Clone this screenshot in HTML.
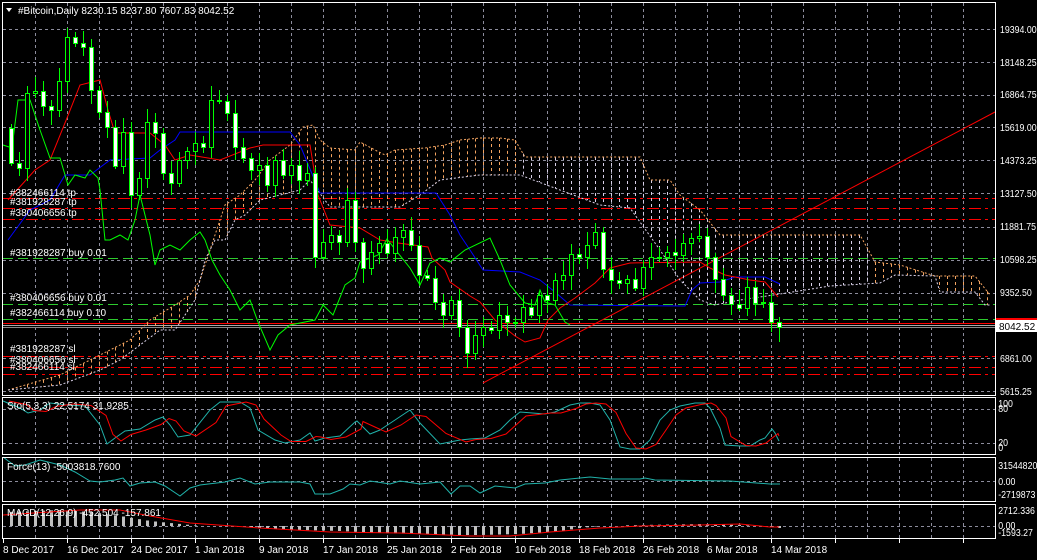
<!DOCTYPE html>
<html><head><meta charset="utf-8"><style>
html,body{margin:0;padding:0;background:#000;width:1037px;height:560px;overflow:hidden}
svg{display:block;font-family:"Liberation Sans",sans-serif}
</style></head><body>
<svg id="s" width="1037" height="560" viewBox="0 0 1037 560" xmlns="http://www.w3.org/2000/svg">
<rect width="1037" height="560" fill="#000"/>
<g id="grid"></g>
<g id="lv"></g>
<g id="cloud"></g>
<g id="ind"></g>
<g id="cand"></g>
<g id="sub"></g>
<g fill="none" stroke="#fff" stroke-width="1">
<rect x="2.5" y="2.5" width="993" height="393"/>
<rect x="2.5" y="397.5" width="993" height="57"/>
<rect x="2.5" y="457.5" width="993" height="44"/>
<rect x="2.5" y="504.5" width="993" height="34"/>
</g>
<g fill="#fff" font-size="10">
<text x="18" y="14">#Bitcoin,Daily  8230.15 8237.80 7607.83 8042.52</text>
<polygon points="6,8 12,8 9,12"/>
</g>
<g fill="#fff" font-size="10">
<text x="10" y="196">#382466114 tp</text>
<text x="10" y="205">#381928287 tp</text>
<text x="10" y="216">#380406656 tp</text>
<text x="10" y="256">#381928287 buy 0.01</text>
<text x="10" y="301">#380406656 buy 0.01</text>
<text x="10" y="316">#382466114 buy 0.10</text>
<text x="10" y="352">#381928287 sl</text>
<text x="10" y="363">#380406656 sl</text>
<text x="10" y="370">#382466114 sl</text>
<text x="7" y="409">Sto(5,3,3) 22.5174 31.9285</text>
<text x="7" y="470">Force(13) -5003818.7600</text>
<text x="7" y="516">MACD(12,26,9) -452.504 -157.861</text>
</g>
<g fill="#fff" font-size="10" transform="translate(1000,0) scale(0.88,1)">
<text x="0" y="33">19394.00</text>
<text x="0" y="66">18148.25</text>
<text x="0" y="98">16864.75</text>
<text x="0" y="131">15619.00</text>
<text x="0" y="164">14373.25</text>
<text x="0" y="197">13127.50</text>
<text x="0" y="230">11881.75</text>
<text x="0" y="263">10598.25</text>
<text x="0" y="296">9352.50</text>
<text x="0" y="362">6861.00</text>
<text x="0" y="395">5615.25</text>
<text x="-2" y="407">100</text>
<text x="-2" y="412">80</text>
<text x="-2" y="446">20</text>
<text x="-2" y="451">0</text>
<text x="-2" y="469">31544820</text>
<text x="-2" y="485">0.00</text>
<text x="-2" y="498">-2719873</text>
<text x="-2" y="514">2712.336</text>
<text x="-2" y="529">0.00</text>
<text x="-2" y="536">-1593.27</text>
</g>
<rect x="996" y="318" width="41" height="4" fill="#f00"/>
<rect x="996" y="320" width="41" height="12" fill="#fff"/>
<text x="999" y="330" font-size="10" fill="#000">8042.52</text>
<g fill="#fff" font-size="10">
<text x="3" y="553">8 Dec 2017</text>
<text x="67" y="553">16 Dec 2017</text>
<text x="131" y="553">24 Dec 2017</text>
<text x="195" y="553">1 Jan 2018</text>
<text x="259" y="553">9 Jan 2018</text>
<text x="323" y="553">17 Jan 2018</text>
<text x="387" y="553">25 Jan 2018</text>
<text x="451" y="553">2 Feb 2018</text>
<text x="515" y="553">10 Feb 2018</text>
<text x="579" y="553">18 Feb 2018</text>
<text x="643" y="553">26 Feb 2018</text>
<text x="707" y="553">6 Mar 2018</text>
<text x="771" y="553">14 Mar 2018</text>
</g>
</svg>
<script>
const NS="http://www.w3.org/2000/svg";
function el(p,t,a){const e=document.createElementNS(NS,t);for(const k in a)e.setAttribute(k,a[k]);document.getElementById(p).appendChild(e);return e;}
function pl(p,pts,c,extra){const a={points:pts.map(q=>q.join(',')).join(' '),fill:'none',stroke:c,'stroke-width':1};Object.assign(a,extra||{});return el(p,'polyline',a);}
const gc="#8c8c9c";
for(let x=35;x<995;x+=32){
 [[3,395],[398,454],[458,501],[505,538]].forEach(r=>el('grid','line',{x1:x+.5,y1:r[0],x2:x+.5,y2:r[1],stroke:gc,'stroke-dasharray':'3,3'}));
}
for(let x=3;x<995;x+=64) el('grid','line',{x1:x+.5,y1:539,x2:x+.5,y2:543,stroke:'#fff'});
[29,62,95,127,160,193,227,260,293,358,391,409,443,481,526].forEach(y=>el('grid','line',{x1:3,y1:y+.5,x2:995,y2:y+.5,stroke:gc,'stroke-dasharray':'3,3'}));
[198,208,219,356,367,374].forEach(y=>el('lv','line',{x1:3,y1:y+.5,x2:995,y2:y+.5,stroke:'#f00','stroke-dasharray':'12,4,3,4'}));
[258,304,319].forEach(y=>el('lv','line',{x1:3,y1:y+.5,x2:995,y2:y+.5,stroke:'#2ecc2e','stroke-dasharray':'10,5'}));
el('lv','line',{x1:3,y1:323.5,x2:995,y2:323.5,stroke:'#f00'});
el('lv','line',{x1:3,y1:325.5,x2:995,y2:325.5,stroke:'#aaa'});
el('lv','line',{x1:3,y1:327.5,x2:995,y2:327.5,stroke:'#888'});
el('lv','line',{x1:483,y1:383,x2:995,y2:112,stroke:'#f00'});
const up=[[8,390],[60,375],[100,355],[130,340],[150,320],[175,305],[190,295],[200,280],[215,235],[225,205],[240,195],[255,180],[270,160],[290,145],[303,127],[313,125],[320,140],[330,148],[355,150],[360,142],[375,150],[385,155],[395,150],[425,148],[445,145],[460,140],[480,138],[500,138],[515,140],[525,157],[600,157],[640,157],[650,180],[670,180],[680,195],[700,210],[720,235],[860,235],[875,262],[900,265],[935,276],[975,276],[990,295]];
const lo=[[8,390],[60,385],[100,370],[120,360],[140,345],[160,330],[175,330],[195,300],[205,260],[215,240],[225,240],[235,220],[245,215],[260,200],[280,195],[300,190],[310,180],[330,207],[400,207],[420,195],[440,180],[480,175],[520,175],[600,205],[630,208],[660,250],[680,280],[700,300],[715,305],[740,300],[780,294],[830,286],[880,283],[895,275],[935,276],[940,292],[975,292],[985,305],[990,305]];
function interp(a,x){for(let i=1;i<a.length;i++){if(x<=a[i][0]){const p=a[i-1],q=a[i];return p[1]+(q[1]-p[1])*(x-p[0])/(q[0]-p[0]);}}return a[a.length-1][1];}
const orange="#f4a460",wh="#d8d0e8";
for(let x=19;x<=988;x+=8){const y1=interp(up,x),y2=interp(lo,x);const c=(x>520&&x<870)?wh:orange;
 if(Math.abs(y2-y1)>3) el('cloud','line',{x1:x+.5,y1:y1,x2:x+.5,y2:y2,stroke:c,'stroke-dasharray':'3,3'});}
pl('cloud',up,orange,{'stroke-dasharray':'2,2'});
pl('cloud',lo,wh,{'stroke-dasharray':'2,2'});
pl('ind',[[8,240],[30,210],[50,200],[65,175],[90,175],[110,160],[150,158],[160,150],[175,140],[180,132],[290,132],[300,145],[320,193],[436,193],[450,215],[460,235],[470,250],[483,270],[520,272],[540,280],[555,292],[570,305],[685,306],[692,290],[700,283],[720,282],[735,277],[765,277],[780,284]],'#0000ff');
pl('ind',[[8,200],[35,170],[50,160],[67,118],[80,85],[100,80],[108,110],[115,133],[150,133],[165,145],[175,160],[190,155],[220,160],[250,148],[263,145],[310,145],[318,195],[330,225],[360,228],[380,240],[398,243],[428,247],[432,258],[445,270],[450,282],[470,296],[480,302],[495,320],[515,336],[525,342],[540,338],[548,320],[560,308],[575,298],[595,283],[610,268],[630,263],[700,262],[710,268],[725,275],[750,280],[765,282],[772,290],[778,297]],'#ff0000');
pl('ind',[[3,145],[12,148],[18,100],[30,100],[40,130],[50,158],[60,158],[68,185],[75,175],[85,178],[90,170],[98,178],[100,190],[105,240],[110,240],[120,235],[128,240],[135,220],[140,195],[150,235],[155,265],[160,250],[170,245],[180,250],[190,240],[200,232],[205,240],[212,260],[220,275],[230,290],[240,310],[250,300],[258,322],[270,350],[278,335],[290,325],[315,320],[323,305],[333,315],[345,285],[355,278],[360,262],[378,255],[387,239],[398,253],[410,268],[420,285],[430,263],[440,258],[450,262],[465,250],[490,238],[500,260],[510,285],[525,303],[535,305],[540,290],[545,302],[555,305],[565,322],[570,325]],'#00ff00');
const C=[163,168,93,91,106,110,81,37,43,47,90,112,127,166,132,195,178,122,133,173,183,160,151,143,147,100,101,113,147,158,170,165,185,160,175,165,180,173,257,242,235,242,200,242,268,252,243,253,237,230,245,275,278,302,315,300,327,353,335,327,330,315,322,322,307,315,295,300,280,275,254,257,245,232,269,280,283,279,288,267,257,257,252,255,243,238,236,257,279,295,304,308,287,303,302,322,327];
let prev=128;
const n=C.length;const x0=779-(n-1)*8;
for(let i=0;i<n;i++){const x=x0+i*8;const o=prev,c=C[i];const top=Math.min(o,c),bot=Math.max(o,c);
 const hi=top-(4+(i*7)%11),lo2=bot+(3+(i*5)%13);
 el('cand','line',{x1:x+.5,y1:hi,x2:x+.5,y2:lo2,stroke:'#00ff00'});
 el('cand','rect',{x:x-2+.5,y:top+.5,width:4,height:Math.max(1,bot-top),fill:c>o?'#fff':'#000',stroke:'#00ff00'});
 prev=c;}
const st=[[3,401],[20,408],[28,413],[40,410],[50,403],[67,405],[85,406],[100,425],[107,444],[115,438],[125,431],[140,429],[155,420],[163,417],[170,425],[178,437],[190,435],[210,410],[220,402],[240,402],[250,408],[258,430],[275,440],[285,443],[300,440],[310,433],[315,441],[325,438],[340,436],[355,422],[357,421],[370,434],[380,430],[395,420],[410,410],[420,423],[440,444],[460,440],[470,439],[485,438],[500,430],[510,420],[520,412],[545,414],[555,412],[570,405],[580,403],[590,403],[600,405],[610,420],[620,447],[630,449],[640,449],[650,440],[660,420],[670,410],[680,406],[695,403],[705,403],[710,408],[720,428],[725,445],[740,446],[750,446],[760,440],[765,438],[772,429],[775,433],[779,441]];
pl('sub',st,'#20b2aa');
const sg=st.map((p,i)=>[p[0]+6,i>0?(p[1]+st[i-1][1])/2:p[1]]).filter(p=>p[0]<779);sg.push([779,436]);
pl('sub',sg,'#ff0000');
pl('sub',[[3,457],[15,466],[25,465],[40,460],[60,465],[75,472],[90,481],[100,482],[115,480],[123,478],[130,486],[140,483],[155,482],[165,486],[180,496],[190,488],[200,485],[225,482],[240,478],[255,484],[270,482],[300,482],[310,484],[315,494],[330,494],[343,489],[350,484],[360,485],[370,481],[390,484],[400,481],[420,484],[440,482],[451,494],[460,486],[470,486],[480,493],[495,486],[515,488],[525,484],[545,483],[560,480],[590,477],[610,479],[640,479],[645,478],[655,480],[730,481],[770,484],[780,484]],'#20b2aa');
const hv=[[8,-14],[60,-16],[90,-14],[120,-10],[150,-5],[180,-2],[200,0],[240,0],[260,2],[300,4],[340,5],[380,7],[420,8],[460,9],[480,9],[520,8],[560,5],[580,2],[600,0],[640,-1],[700,-2],[740,-1],[770,1],[779,2]];
for(let x=x0;x<=779;x+=8){const v=interp(hv,x);if(Math.abs(v)<.5)continue;el('sub','rect',{x:x-1,y:v<0?526+v:526,width:3,height:Math.abs(v),fill:'#c0c0c0'});}
pl('sub',[[3,515],[80,510],[120,510],[150,516],[190,523],[260,528],[330,532],[400,533],[470,536],[510,536],[550,532],[600,528],[640,526],[700,525],[740,524],[770,527],[779,527]],'#ff0000');
</script>
</body></html>
